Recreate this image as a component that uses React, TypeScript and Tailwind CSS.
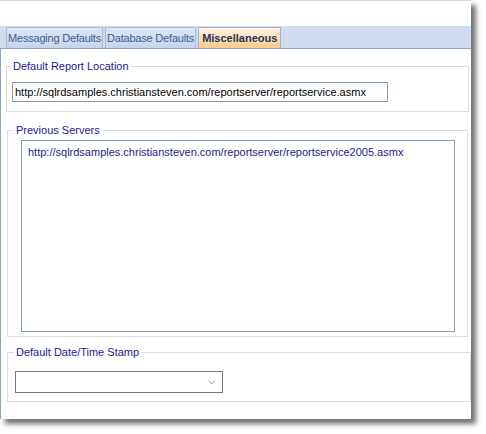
import { ChevronDown } from "lucide-react";

const tabs = [
  { label: "Messaging Defaults", active: false },
  { label: "Database Defaults", active: false },
  { label: "Miscellaneous", active: true },
];

function Tab({ label, active }: { label: string; active: boolean }) {
  if (active) {
    return (
      <div className="h-[21px] px-[3px] flex items-center border border-b-0 border-[#9fb3cc] bg-gradient-to-b from-[#fff4e4] to-[#fbcb8c] text-[11px] font-bold text-[#1d3557]">
        {label}
      </div>
    );
  }
  return (
    <div className="h-[21px] px-[1px] flex items-center border border-b-0 border-[#a7bcd9] bg-gradient-to-b from-[#dbe7f6] to-[#c4d6ef] text-[11px] tracking-[-0.2px] text-[#3e5f8e]">
      {label}
    </div>
  );
}

export default function App() {
  return (
    <div className="w-[486px] h-[434px] bg-white font-['Liberation_Sans',Arial,sans-serif]">
      {/* Dialog window */}
      <div className="w-[471px] h-[419px] bg-white flex flex-col border-t border-[#d8d8d8] shadow-[5px_5px_5px_rgba(0,0,0,0.55)]">
        <div className="h-[25px]" />

        {/* Tab strip */}
        <div className="h-[23px] flex items-end gap-[2px] pl-[6px] bg-[#cfdcee] border-b border-[#8ea6c8]">
          {tabs.map((t) => (
            <Tab key={t.label} label={t.label} active={t.active} />
          ))}
        </div>

        {/* Tab page */}
        <div className="flex-1 flex flex-col border-l border-[#8ea6c8] text-[11px]">
          <fieldset className="mt-[11px] ml-[5px] w-[463px] border border-[#dcdcdc] pb-[9px]">
            <legend className="ml-[4px] px-[2px] leading-[13px] text-[#1a1a9a]">
              Default Report Location
            </legend>
            <div className="mt-[9px] ml-[5px] w-[376px] h-[20px] border border-[#7f9db9] flex items-center pl-[2px] text-black">
              http://sqlrdsamples.christiansteven.com/reportserver/reportservice.asmx
            </div>
          </fieldset>

          <fieldset className="mt-[12px] ml-[6px] w-[461px] border border-[#dcdcdc] pb-[4px]">
            <legend className="ml-[6px] px-[2px] leading-[13px] text-[#1a1a9a]">
              Previous Servers
            </legend>
            <div className="mt-[3px] ml-[13px] w-[434px] h-[192px] border border-[#7f9db9] pl-[6px] pt-[3px] text-[#1c1c8a]">
              http://sqlrdsamples.christiansteven.com/reportserver/reportservice2005.asmx
            </div>
          </fieldset>

          <fieldset className="mt-[9px] ml-[6px] w-[464px] border border-[#dcdcdc] pb-[8px]">
            <legend className="ml-[6px] px-[2px] leading-[13px] text-[#1a1a9a]">
              Default Date/Time Stamp
            </legend>
            <div className="mt-[12px] ml-[7px] w-[208px] h-[22px] border border-[#7a7a7a] flex items-center justify-end pr-[5px]">
              <ChevronDown className="w-[11px] h-[11px] text-[#555]" strokeWidth={1.5} />
            </div>
          </fieldset>
        </div>
      </div>
    </div>
  );
}
